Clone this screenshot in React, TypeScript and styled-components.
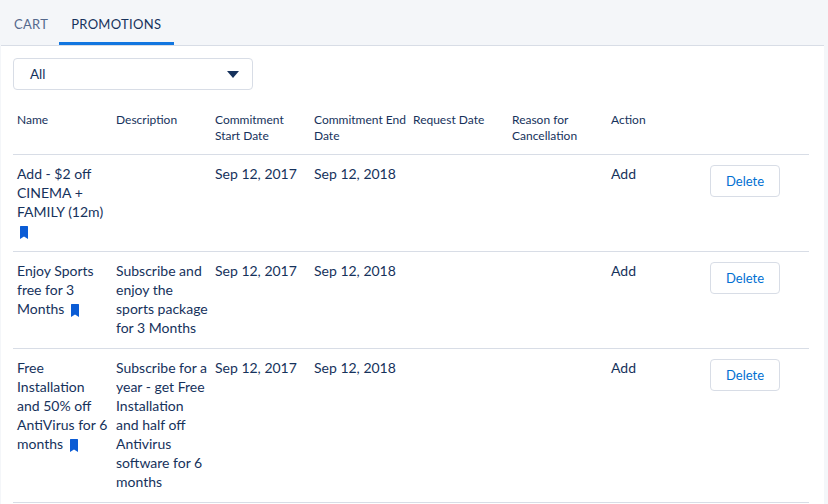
import React from "react";
import styled, { createGlobalStyle } from "styled-components";

const Global = createGlobalStyle`
  html, body { margin: 0; padding: 0; background: #fff; }
  body { font-family: Lato, "Open Sans", "Liberation Sans", sans-serif; color: #16325c; }
`;
const Page = styled.div`
  width: 828px; height: 504px; overflow: hidden; box-sizing: border-box;
  background: #fff; border-left: 1px solid #f4f6f9; border-right: 4px solid #f4f6f9;
`;
const TabBar = styled.div`
  height: 46px; box-sizing: border-box; margin: 0 -4px 0 -1px; display: flex; padding-left: 2px;
  background: #f4f6f9; border-bottom: 1px solid #d8dde6;
`;
const Tab = styled.div<{ $active?: boolean }>`
  height: 45px; box-sizing: border-box; padding: 6px 12px 0; display: flex; align-items: center;
  margin-left: ${p => (p.$active ? "-1px" : "0")};
  width: ${p => (p.$active ? "115px" : "auto")};
  font-size: 13px; letter-spacing: .3px;
  color: ${p => (p.$active ? "#16325c" : "#54698d")};
  border-bottom: 3px solid ${p => (p.$active ? "#1276e0" : "transparent")};
`;
const Select = styled.div`
  margin: 12px 0 0 12px; width: 240px; height: 32px; box-sizing: border-box; padding: 0 17px 0 16px;
  display: flex; align-items: center; justify-content: space-between;
  border: 1px solid #d8dde6; border-radius: 4px; font-size: 13.5px;
`;
const Caret = styled.span`
  width: 0; height: 0; margin: 0 -4px 0 0;
  border-left: 6px solid transparent; border-right: 6px solid transparent; border-top: 7px solid #16325c;
`;
const Table = styled.table`
  margin: 10px 0 0 12px; width: 796px; table-layout: fixed; border-collapse: collapse; font-size: 14px; line-height: 19px;
`;
const Col = styled.col<{ $last?: boolean }>`
  width: ${p => (p.$last ? "103px" : "99px")};
`;
const Head = styled.th`
  padding: 12px 3px 7px 4px; font-size: 12px; line-height: 16px; font-weight: 400; text-align: left; vertical-align: top;
  border-bottom: 1px solid #d8dde6; height: 35px;
`;
const Cell = styled.td`
  padding: 9px 3px 11px 4px; vertical-align: top; border-bottom: 1px solid #d8dde6;
`;
const DeleteButton = styled.button`
  display: block; margin-top: 1px;
  width: 70px; height: 32px; box-sizing: border-box; background: #fff; color: #0070d2; padding: 1px 0 0;
  border: 1px solid #d8dde6; border-radius: 4px; font: inherit; font-size: 13px;
`;
const Mark = styled.svg`
  width: 8px; height: 13px; margin-left: 3px; vertical-align: -3px; fill: #0b5cd5;
`;
const Bookmark = () => (
  <Mark viewBox="0 0 8 13">
    <path d="M0.6 0h6.8a.6.6 0 0 1 .6.6V13L4 10.6 0 13V.6A.6.6 0 0 1 .6 0z" />
  </Mark>
);

const rows = [
  { name: <>Add - $2 off CINEMA + FAMILY (12m) <Bookmark /></>, desc: "" },
  { name: <>Enjoy Sports free for 3 Months <Bookmark /></>, desc: "Subscribe and enjoy the sports package for 3 Months" },
  { name: <>Free Installation and 50% off AntiVirus for 6 months <Bookmark /></>, desc: "Subscribe for a year - get Free Installation and half off Antivirus software for 6 months" },
];
const heads = ["Name", "Description", "Commitment Start Date", "Commitment End Date", "Request Date", "Reason for Cancellation", "Action", ""];

export default function App() {
  return (
    <Page>
      <Global />
      <TabBar>
        <Tab>CART</Tab>
        <Tab $active>PROMOTIONS</Tab>
      </TabBar>
      <Select>All<Caret /></Select>
      <Table>
        <colgroup>
          {heads.map((_, i) => <Col key={i} $last={i === 7} />)}
        </colgroup>
        <thead>
          <tr>{heads.map((h, i) => <Head key={i}>{h}</Head>)}</tr>
        </thead>
        <tbody>
          {rows.map((r, i) => (
            <tr key={i}>
              <Cell>{r.name}</Cell>
              <Cell>{r.desc}</Cell>
              <Cell>Sep 12, 2017</Cell>
              <Cell>Sep 12, 2018</Cell>
              <Cell />
              <Cell />
              <Cell>Add</Cell>
              <Cell><DeleteButton>Delete</DeleteButton></Cell>
            </tr>
          ))}
        </tbody>
      </Table>
    </Page>
  );
}
